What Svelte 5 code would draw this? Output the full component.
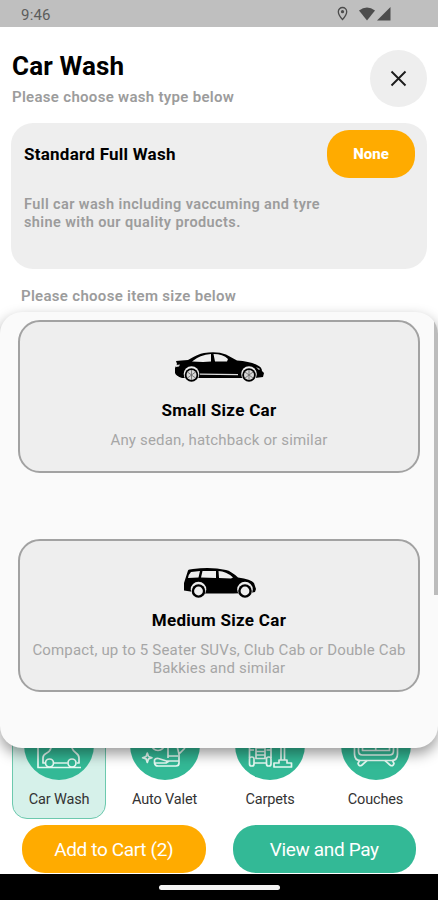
<script>
	let sizes = [
		{ id: 'small', title: 'Small Size Car', info: 'Any sedan, hatchback or similar' },
		{
			id: 'medium',
			title: 'Medium Size Car',
			info: 'Compact, up to 5 Seater SUVs, Club Cab or Double Cab Bakkies and similar'
		}
	];

	let services = ['Car Wash', 'Auto Valet', 'Carpets', 'Couches'];
	let current = 'Car Wash';
	let size = null;
</script>

<div class="screen">
	<div class="status">
		<span class="time">9:46</span>
		<svg class="signals" width="56" height="16" viewBox="0 0 56 16">
			<path
				d="M7.500 1.500a4.200 4.200 0 0 0-4.200 4.200C3.300 8.900 7.500 13.500 7.500 13.500s4.200-4.600 4.200-7.800A4.200 4.200 0 0 0 7.500 1.500z"
				fill="none"
				stroke="#4c4c4c"
				stroke-width="1.300"
			/>
			<circle cx="7.500" cy="5.700" r="1.600" fill="#4c4c4c" />
			<path d="M24 4.500Q32-1.500 40 4.500L32 14.500z" fill="#4c4c4c" />
			<path d="M55.500 1v13.500H42z" fill="#4c4c4c" />
		</svg>
	</div>

	<header>
		<div>
			<h1>Car Wash</h1>
			<p class="hint">Please choose wash type below</p>
		</div>
		<button class="close" aria-label="Close">
			<svg width="18" height="18" viewBox="0 0 18 18">
				<path d="M1.500 1.500l14 14M15.500 1.500l-14 14" stroke="#1c1c1c" stroke-width="1.900" />
			</svg>
		</button>
	</header>

	<section class="wash">
		<div class="wash-head">
			<h2>Standard Full Wash</h2>
			<button class="none">None</button>
		</div>
		<p>Full car wash including vaccuming and tyre shine with our quality products.</p>
	</section>

	<p class="hint size-hint">Please choose item size below</p>

	<footer>
		<div class="services">
			{#each services as name}
				<button class="service" class:active={current === name} on:click={() => (current = name)}>
					<svg width="70" height="70" viewBox="0 0 70 70">
						<circle cx="35" cy="35" r="35" fill="#33b996" />
						<g fill="none" stroke="#e6faf3" stroke-width="1.700" stroke-linejoin="round">
							{#if name === 'Car Wash'}
								<path d="M14 20v37.500h43" />
								<path d="M21 53h-2v-5q0-3 3-4.500 4-2 5-5.500l2-8h16l3 8q1 3 4 5 3 2 3 5v5h-2M30 53h13.500" />
								<circle cx="25.500" cy="53" r="4" />
								<circle cx="48" cy="53" r="4" />
							{:else if name === 'Auto Valet'}
								<path d="M17.300 43l1.200 3.500L22 47.700l-3.500 1.200-1.200 3.500-1.200-3.500-3.500-1.200 3.500-1.200z" />
								<circle cx="28" cy="34" r="6.500" />
								<path d="M38 26v22M42 26v10M55 38l-6 6M47 36l2 8v9q0 3-3 3H28q-3 0-3.500-3v-3q1-2 4-1.500l8 2.500h12M25 53h11l3-2M38 46h10" />
							{:else if name === 'Carpets'}
								<path d="M14.500 20v28M36 20v28M19 53h12M19 40h-4.500M31.500 40H36" />
								<path d="M21 38h9v10.500h-9zM21 41.500h9M21 45h9" />
								<rect x="14.500" y="47" width="4.500" height="9" rx="2" />
								<rect x="31.500" y="47" width="4.500" height="9" rx="2" />
								<path d="M46 18v32M49.500 18v32M44 50h8v3h4.500v4H39v-4h5z" />
							{:else}
								<path d="M17.500 26v15q0 4 4 4h27q4 0 4-4V26M21.500 26v14.500h27V26M34.700 35v5.500" />
								<path d="M18 35q-4-1-4.500 3v6q0 6.500 6 6.500h31q6 0 6-6.500v-6q-.5-4-4.500-3" />
								<path d="M18.500 50.500l-1.500 3q1 3.500 4 1.500l5-4.500M51.500 50.500l1.500 3q-1 3.500-4 1.500l-5-4.500" />
							{/if}
						</g>
					</svg>
					<span>{name}</span>
				</button>
			{/each}
		</div>
		<div class="actions">
			<button class="cart">Add to Cart (2)</button>
			<button class="pay">View and Pay</button>
		</div>
		<div class="navbar"><i></i></div>
	</footer>

	<div class="sheet">
		{#each sizes as item}
			<button class="size {item.id}" on:click={() => (size = item.id)}>
				{#if item.id === 'small'}
					<svg width="92" height="34" viewBox="0 0 92 34">
						<path
							d="M3 10Q8 9.500 15 9Q25 3 31 2Q44 0 53 3.500L64 9.500Q77 10.500 84 14Q89 16 89 20L91 22L90 26L82 27H9Q3 25 2 22V17L4 13z"
						/>
						<path d="M19 10.500Q27 3.500 38 3V10.500L30 11zM40.500 3Q50 3 55 8L54 10.500L42 10.500z" fill="#eee" />
						<path d="M27 22.500l38 .5v1.200l-38-.5zM3 14l4-.5-1 2-3 .5zM83 16l4 2-1 1z" fill="#ddd" />
						{#each [18.500, 76] as x}
							<circle cx={x} cy="23" r="7.800" fill="#eee" />
							<circle cx={x} cy="24" r="6.800" />
							<circle cx={x} cy="24" r="5" fill="#d8d8d8" />
							<path d="M{x - 4} 21l8 6m0-6l-8 6M{x} 19v10" stroke="#666" stroke-width=".8" />
						{/each}
					</svg>
				{:else}
					<svg width="92" height="34" viewBox="0 0 92 34">
						<path
							d="M15 3.500Q16 2 20 2Q38-.5 53 3Q58 4 65 10.500Q78 12 81 16L83 22L82 25L77 26L60 26.500H30L11 23.500V16z"
						/>
						<path
							d="M18 5l9-1-1.500 6.500L15 11q0-3 3-6zM29.500 4H43v7l-15-.5zM45.500 4Q53 4 60 10.500L58 11.500 46 11z"
							fill="#eee"
						/>
						{#each [25.500, 72] as x}
							<circle cx={x} cy="22.500" r="7.800" fill="#eee" />
							<circle cx={x} cy="24" r="6.800" />
							<circle cx={x} cy="24" r="4.400" fill="#eee" />
						{/each}
					</svg>
				{/if}
				<strong>{item.title}</strong>
				<span>{item.info}</span>
			</button>
		{/each}
		<i class="scrollbar"></i>
	</div>
</div>

<style>
	:global(body) {
		background: #fff;
	}
	.screen {
		position: relative;
		display: flex;
		flex-direction: column;
		width: 438px;
		height: 900px;
		overflow: hidden;
		background: #fff;
		font-family: Roboto, sans-serif;
		color: #000;
	}
	h1,
	h2,
	p {
		margin: 0;
	}
	button {
		border: 0;
		padding: 0;
		font-family: inherit;
		cursor: pointer;
	}

	.status {
		display: flex;
		flex-shrink: 0;
		justify-content: space-between;
		align-items: center;
		height: 27px;
		padding: 0 47px 0 21px;
		background: #bfbfbf;
		box-sizing: border-box;
	}
	.time {
		font-size: 15px;
		line-height: 18px;
		letter-spacing: 0.2px;
		color: #5c5c5c;
		padding-top: 2px;
	}

	header {
		display: flex;
		justify-content: space-between;
		padding: 23px 11px 0 12px;
	}
	h1 {
		font-size: 26px;
		line-height: 32px;
		letter-spacing: 0.15px;
	}
	.hint {
		font-size: 15px;
		line-height: 18px;
		font-weight: 600;
		letter-spacing: 0.3px;
		color: #9c9c9c;
	}
	header .hint {
		margin-top: 6px;
	}
	.close {
		display: flex;
		align-items: center;
		justify-content: center;
		width: 57px;
		height: 57px;
		border-radius: 50%;
		background: #eee;
	}

	.wash {
		height: 146px;
		margin: 16px 11px 0;
		padding: 7px 12px 0 13px;
		border-radius: 22px;
		background: #eee;
		box-sizing: border-box;
	}
	.wash-head {
		display: flex;
		align-items: center;
		justify-content: space-between;
	}
	h2 {
		font-size: 17px;
		line-height: 20px;
		letter-spacing: 0.25px;
	}
	.none {
		width: 88px;
		height: 48px;
		border-radius: 22px;
		background: #ffab00;
		color: #fff;
		font-size: 15px;
		font-weight: 800;
	}
	.wash p {
		width: 310px;
		margin-top: 18px;
		font-size: 14.5px;
		line-height: 18px;
		font-weight: 600;
		letter-spacing: 0.4px;
		color: #9c9c9c;
	}
	.size-hint {
		margin: 18px 0 0 21px;
	}

	footer {
		margin-top: auto;
	}
	.services {
		display: flex;
		gap: 11.5px;
		padding: 0 14px 0 12px;
	}
	.service {
		display: flex;
		flex-direction: column;
		align-items: center;
		flex: none;
		width: 94px;
		height: 121px;
		padding-top: 11px;
		border: 1px solid transparent;
		border-radius: 15px;
		background: none;
		font-size: 14.5px;
		line-height: 18px;
		letter-spacing: -0.15px;
		color: #333;
		box-sizing: border-box;
	}
	.service span {
		margin-top: 11px;
	}
	.service.active {
		border-color: #6cc9ae;
		background: #d6f1ea;
	}
	.actions {
		display: flex;
		gap: 27px;
		padding: 6px 22px 1px;
	}
	.actions button {
		flex: 1;
		height: 48px;
		border-radius: 23px;
		font-size: 19px;
		letter-spacing: -0.35px;
		color: #fff;
	}
	.actions .cart {
		background: #ffab00;
	}
	.actions .pay {
		background: #33b996;
	}
	.navbar {
		display: flex;
		justify-content: center;
		height: 26px;
		padding-top: 10.5px;
		background: #000;
		box-sizing: border-box;
	}
	.navbar i {
		width: 121px;
		height: 5px;
		border-radius: 3px;
		background: #f4f4f4;
	}

	/* pull-up list over the page */
	.sheet {
		position: absolute;
		top: 312px;
		left: 0;
		right: 0;
		height: 436px;
		padding: 8px 18px 0;
		border-radius: 22px;
		background: #fafafa;
		box-shadow: 0 6px 14px rgba(0, 0, 0, 0.4);
		box-sizing: border-box;
		overflow: hidden;
	}
	.size {
		display: flex;
		flex-direction: column;
		align-items: center;
		width: 402px;
		height: 153px;
		margin-bottom: 66px;
		padding: 29px 4px 0;
		border: 2px solid #a2a2a2;
		border-radius: 22px;
		background: #eee;
		color: #000;
		box-sizing: border-box;
	}
	.size svg {
		flex: none;
	}
	.size.medium {
		padding-top: 26px;
	}
	.size strong {
		margin-top: 15px;
		font-size: 17px;
		line-height: 20px;
		letter-spacing: 0.3px;
	}
	.size.medium strong {
		margin-top: 9px;
	}
	.size span {
		margin-top: 11px;
		font-size: 15px;
		line-height: 18px;
		letter-spacing: 0.17px;
		color: #a6a6a6;
	}
	.scrollbar {
		position: absolute;
		top: 9px;
		right: 0;
		width: 4px;
		height: 274px;
		background: #bcbcbc;
	}
</style>
